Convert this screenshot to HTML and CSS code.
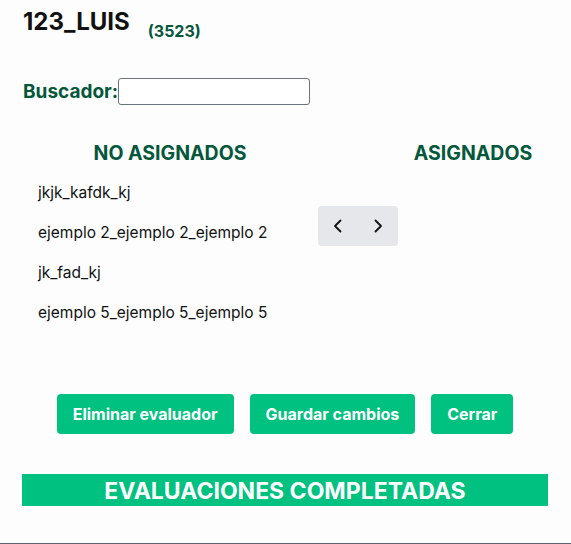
FILE: index.html
```html
<!DOCTYPE html>
<html lang="es">
<head>
<meta charset="utf-8">
<link rel="stylesheet" href="styles.css">
</head>
<body>
<div class="page">
  <header class="header">
    <h1 class="title">123_LUIS</h1>
    <span class="code">(3523)</span>
  </header>
  <div class="search">
    <label class="search-label" for="q">Buscador:</label>
    <input class="search-input" id="q" type="text">
  </div>
  <div class="lists">
    <div class="col col-left">
      <h2 class="col-title">NO ASIGNADOS</h2>
      <ul class="items">
        <li>jkjk_kafdk_kj</li>
        <li>ejemplo 2_ejemplo 2_ejemplo 2</li>
        <li>jk_fad_kj</li>
        <li>ejemplo 5_ejemplo 5_ejemplo 5</li>
      </ul>
    </div>
    <div class="col col-mid">
      <div class="arrows">
        <button class="arrow" type="button" aria-label="Anterior">
          <svg width="12" height="16" viewBox="0 0 12 16"><path d="M8.5 2.5 3 8l5.5 5.5" fill="none" stroke="#111" stroke-width="1.8" stroke-linecap="round" stroke-linejoin="round"/></svg>
        </button>
        <button class="arrow" type="button" aria-label="Siguiente">
          <svg width="12" height="16" viewBox="0 0 12 16"><path d="M3.5 2.5 9 8l-5.5 5.5" fill="none" stroke="#111" stroke-width="1.8" stroke-linecap="round" stroke-linejoin="round"/></svg>
        </button>
      </div>
    </div>
    <div class="col col-right">
      <h2 class="col-title">ASIGNADOS</h2>
    </div>
  </div>
  <div class="actions">
    <button class="btn" type="button">Eliminar evaluador</button>
    <button class="btn" type="button">Guardar cambios</button>
    <button class="btn" type="button">Cerrar</button>
  </div>
  <div class="banner">EVALUACIONES COMPLETADAS</div>
</div>
</body>
</html>
```
FILE: styles.css
```css
* { box-sizing: border-box; }
html, body { margin: 0; padding: 0; }
body {
  background: #fdfdfd;
  font-family: Inter, "Liberation Sans", Arial, sans-serif;
  color: #111;
  height: 544px;
  border-bottom: 1px solid #5f6368;
}
.page {
  width: 526px;
  margin-left: 22px;
  padding-top: 8px;
}
.header {
  display: flex;
  align-items: flex-start;
}
.title {
  margin: 0;
  font-size: 24px;
  font-weight: 700;
  line-height: 28px;
  padding-left: 1px;
}
.code {
  margin-left: 18px;
  margin-top: 13px;
  font-size: 16px;
  font-weight: 700;
  color: #03573b;
  line-height: 20px;
}
.search {
  display: flex;
  align-items: center;
  margin-top: 37px;
}
.search-label {
  font-size: 19px;
  font-weight: 700;
  color: #03573b;
  padding-left: 1px;
}
.search-input {
  width: 192px;
  height: 27px;
  border: 1px solid #6b7280;
  border-radius: 3px;
  background: #fff;
  margin: 0;
}
.lists {
  display: flex;
  margin-top: 36px;
}
.col-left { width: 296px; }
.col-mid { width: 80px; }
.col-right { width: 150px; }
.col-title {
  margin: 0;
  text-align: center;
  font-size: 19.5px;
  font-weight: 700;
  color: #03573b;
  line-height: 24px;
}
.items {
  list-style: none;
  margin: 18px 0 0;
  padding: 0 0 0 16px;
}
.items li {
  font-size: 15.5px;
  line-height: 20px;
  height: 40px;
}
.arrows {
  margin-top: 65px;
  display: flex;
  justify-content: center;
  gap: 16px;
  width: 80px;
  height: 40px;
  background: #e5e7eb;
  border-radius: 4px;
}
.arrow {
  background: none;
  border: 0;
  padding: 0;
  width: 24px;
  display: flex;
  align-items: center;
  justify-content: center;
}
.actions {
  display: flex;
  justify-content: center;
  gap: 16px;
  margin-top: 51px;
}
.btn {
  height: 40px;
  padding: 0 16px;
  border: 0;
  border-radius: 4px;
  background: #00c17f;
  color: #fff;
  font-family: inherit;
  font-size: 16px;
  font-weight: 700;
}
.banner {
  margin-top: 40px;
  height: 32px;
  background: #00c17f;
  color: #fff;
  text-align: center;
  font-size: 23px;
  font-weight: 700;
  line-height: 34px;
}
```
